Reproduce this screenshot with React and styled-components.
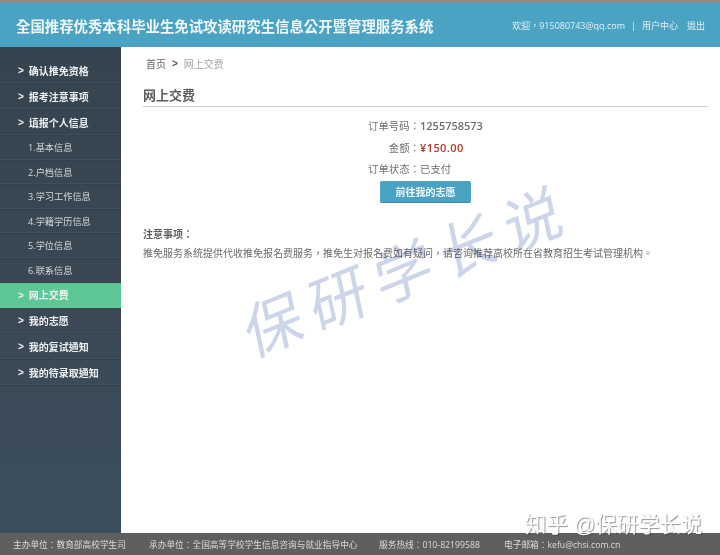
import React from "react";
import styled, { createGlobalStyle } from "styled-components";

const Global = createGlobalStyle`
  html, body { margin: 0; padding: 0; background: #fff; }
  * { box-sizing: border-box; }
  body { font-family: "Open Sans", "Noto Sans CJK TC", sans-serif; }
`;

const Page = styled.div`
  position: relative;
  width: 720px;
  height: 555px;
  overflow: hidden;
  display: flex;
  flex-direction: column;
  border-top: 3px solid #8a8a8c;
  color: #666;
`;

const Header = styled.header`
  height: 44px;
  flex: none;
  display: flex;
  align-items: center;
  justify-content: space-between;
  padding: 1px 15px 0 16px;
  background: #4ba3c3;
  color: #fff;
`;

const Title = styled.h1`
  margin: 0;
  font-size: 14.4px;
  font-weight: 700;
  color: #eef7fa;
  white-space: nowrap;
`;

const UserBar = styled.div`
  display: flex;
  align-items: center;
  font-size: 9px;
  color: #e4f2f7;
  white-space: nowrap;
`;

const UserLink = styled.span`
  margin-left: ${(p) => p.$gap || 0}px;
`;

const Body = styled.div`
  flex: 1;
  display: flex;
  min-height: 0;
`;

const Sidebar = styled.nav`
  width: 121px;
  flex: none;
  padding-top: 11px;
  background: linear-gradient(180deg, #36444f 0%, #3a4854 50%, #3c4e5d 100%);
`;

const MainItem = styled.div`
  height: ${(p) => (p.$active ? 25 : 26)}px;
  display: flex;
  align-items: center;
  gap: 5px;
  padding-left: 18px;
  padding-bottom: 1px;
  font-size: 10px;
  font-weight: 700;
  color: #eef1f3;
  background: ${(p) => (p.$active ? "#5dc795" : "transparent")};
  border-bottom: 1px solid ${(p) => (p.$active ? "#5dc795" : "#33414c")};
  box-shadow: ${(p) => (p.$active ? "none" : "inset 0 -1px 0 #414f5b")};
`;

const Chevron = styled.span`
  font-family: "Liberation Sans", sans-serif;
  font-size: 10px;
  font-weight: 700;
  line-height: 1;
  margin-top: 2px;
`;

const SubItem = styled.div`
  height: 24.5px;
  display: flex;
  align-items: center;
  padding-left: 28px;
  padding-bottom: 1px;
  font-size: 9.2px;
  color: #d4dade;
  border-bottom: 1px solid #33414c;
  box-shadow: inset 0 -1px 0 #414f5b;
`;

const Main = styled.main`
  flex: 1;
  padding: 8px 12px 0 22px;
  min-width: 0;
`;

const Breadcrumb = styled.div`
  display: flex;
  align-items: center;
  height: 16px;
  padding-left: 3px;
  font-size: 10px;
  color: #666;
`;

const Sep = styled.span`
  margin: 0 6px;
  font-family: "Liberation Sans", sans-serif;
  font-size: 10px;
  font-weight: 700;
  color: #555;
`;

const Current = styled.span`
  color: #a5a5a5;
`;

const PageTitle = styled.h2`
  margin: 8px 0 0;
  height: 28px;
  padding-top: 6px;
  font-size: 13px;
  line-height: 20px;
  font-weight: 700;
  color: #5d5d5d;
  border-bottom: 1px solid #cfcfcf;
`;

const Order = styled.div`
  display: grid;
  grid-template-columns: auto auto;
  grid-template-rows: 21.5px 21.5px 18.5px;
  justify-content: center;
  align-items: baseline;
  margin-top: 11px;
  font-size: 10.4px;
  color: #717171;
`;

const Label = styled.span`
  text-align: right;
  white-space: nowrap;
`;

const Value = styled.span`
  font-size: ${(p) => (p.$strong ? 11 : 10.4)}px;
  font-weight: ${(p) => (p.$strong ? 600 : 400)};
  color: ${(p) => (p.$price ? "#b0392a" : "#6e6e6e")};
  letter-spacing: ${(p) => (p.$price ? "0.4px" : "0")};
  white-space: nowrap;
`;

const ButtonRow = styled.div`
  display: flex;
  justify-content: center;
  margin-top: 1px;
`;

const Button = styled.button`
  width: 91px;
  height: 22px;
  padding: 0;
  border: 0;
  border-radius: 2px;
  background: #4ba3c3;
  border-bottom: 1px solid #3d8ea9;
  color: #f2f9fb;
  font-family: inherit;
  font-size: 10px;
  font-weight: 700;
`;

const Notes = styled.section`
  margin-top: 24px;
`;

const NoteHead = styled.div`
  font-size: 10px;
  line-height: 14px;
  font-weight: 700;
  color: #5f5f5f;
`;

const NoteText = styled.p`
  margin: 5px 0 0;
  font-size: 10px;
  line-height: 14px;
  color: #6a6a6a;
  white-space: nowrap;
`;

const Footer = styled.footer`
  height: 22px;
  flex: none;
  display: flex;
  align-items: center;
  padding-left: 13px;
  background: #5f5f5f;
  color: #dcdcdc;
  font-size: 8.7px;
  white-space: nowrap;
`;

const FooterItem = styled.span`
  flex: none;
  width: ${(p) => p.$w}px;
`;

const Watermark = styled.div`
  position: absolute;
  left: 245px;
  top: 299px;
  font-family: "Noto Sans CJK JP", "Noto Sans CJK SC", sans-serif;
  font-size: 60px;
  font-weight: 400;
  line-height: 1;
  letter-spacing: 10px;
  color: #cdd5e8;
  transform: rotate(-22deg) skewX(-10deg);
  transform-origin: left center;
  white-space: nowrap;
  mix-blend-mode: multiply;
  pointer-events: none;
`;

const ZhihuMark = styled.div`
  position: absolute;
  left: 525px;
  top: 510px;
  font-family: "Liberation Sans", "Noto Sans CJK SC", sans-serif;
  font-size: 21.4px;
  line-height: 24px;
  color: #fff;
  text-shadow: 1px 1px 1px rgba(60, 60, 60, 0.55);
  white-space: nowrap;
  pointer-events: none;
`;

const topItems = ["确认推免资格", "报考注意事项", "填报个人信息"];
const subItems = ["1.基本信息", "2.户档信息", "3.学习工作信息", "4.学籍学历信息", "5.学位信息", "6.联系信息"];
const bottomItems = ["我的志愿", "我的复试通知", "我的待录取通知"];

const Item = ({ label, active }) => (
  <MainItem $active={active}>
    <Chevron>&gt;</Chevron>
    <span>{label}</span>
  </MainItem>
);

export default function App() {
  return (
    <Page>
      <Global />
      <Header>
        <Title>全国推荐优秀本科毕业生免试攻读研究生信息公开暨管理服务系统</Title>
        <UserBar>
          <span>欢迎，915080743@qq.com</span>
          <UserLink $gap={6}>|</UserLink>
          <UserLink $gap={6}>用户中心</UserLink>
          <UserLink $gap={9}>退出</UserLink>
        </UserBar>
      </Header>
      <Body>
        <Sidebar>
          {topItems.map((t) => (
            <Item key={t} label={t} />
          ))}
          {subItems.map((t) => (
            <SubItem key={t}>{t}</SubItem>
          ))}
          <Item label="网上交费" active />
          {bottomItems.map((t) => (
            <Item key={t} label={t} />
          ))}
        </Sidebar>
        <Main>
          <Breadcrumb>
            <span>首页</span>
            <Sep>&gt;</Sep>
            <Current>网上交费</Current>
          </Breadcrumb>
          <PageTitle>网上交费</PageTitle>
          <Order>
            <Label>订单号码：</Label>
            <Value $strong>1255758573</Value>
            <Label>金额：</Label>
            <Value $strong $price>¥150.00</Value>
            <Label>订单状态：</Label>
            <Value>已支付</Value>
          </Order>
          <ButtonRow>
            <Button>前往我的志愿</Button>
          </ButtonRow>
          <Notes>
            <NoteHead>注意事项：</NoteHead>
            <NoteText>推免服务系统提供代收推免报名费服务，推免生对报名费如有疑问，请咨询推荐高校所在省教育招生考试管理机构。</NoteText>
          </Notes>
        </Main>
      </Body>
      <Footer>
        <FooterItem $w={136}>主办单位：教育部高校学生司</FooterItem>
        <FooterItem $w={230}>承办单位：全国高等学校学生信息咨询与就业指导中心</FooterItem>
        <FooterItem $w={125}>服务热线：010-82199588</FooterItem>
        <FooterItem $w={140}>电子邮箱：kefu@chsi.com.cn</FooterItem>
      </Footer>
      <Watermark>保研学长说</Watermark>
      <ZhihuMark>知乎 @保研学长说</ZhihuMark>
    </Page>
  );
}
